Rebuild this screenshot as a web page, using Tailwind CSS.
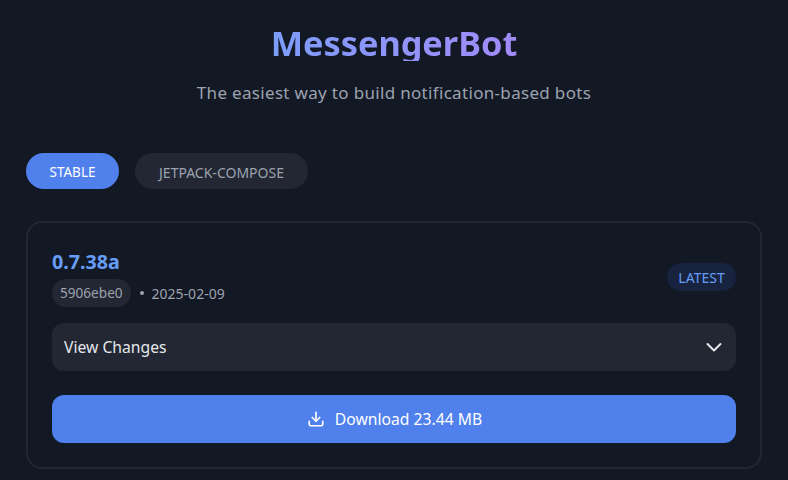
<!DOCTYPE html>
<html lang="en">
<head>
<meta charset="utf-8">
<script src="https://cdn.jsdelivr.net/npm/@tailwindcss/browser@4"></script>
<title>MessengerBot</title>
</head>
<body class="m-0 h-[480px] w-[788px] overflow-hidden bg-[#131825] font-['Noto_Sans',sans-serif] text-[#e5e7eb]">
<main class="flex flex-col px-[26px]">
  <header class="flex flex-col items-center pt-[24px]">
    <h1 class="h-[37px] bg-gradient-to-r from-[#7c9dfb] to-[#a08bf8] bg-clip-text text-[34.3px] leading-[37px] font-bold text-transparent">MessengerBot</h1>
    <p class="mt-[20px] text-[17px] leading-[24px] tracking-[0.32px] text-[#9ca3af]">The easiest way to build notification-based bots</p>
  </header>
  <nav class="mt-[48px] flex gap-4">
    <button class="flex h-9 w-[93px] items-center justify-center rounded-full bg-[#4f80ec] pt-[2px] text-[13.5px] text-white">STABLE</button>
    <button class="flex h-9 w-[173px] items-center justify-center rounded-full bg-[#222733] pt-[2px] text-[14px] text-[#9ca3af]">JETPACK-COMPOSE</button>
  </nav>
  <section class="mt-[32px] h-[248px] w-[736px] rounded-2xl border-2 border-[#222733] px-6 pt-6">
    <div class="flex items-center justify-between">
      <div>
        <div class="mt-[2px] text-[19.7px] leading-[26px] font-bold text-[#669df6]">0.7.38a</div>
        <div class="mt-[4px] flex items-center text-[14px] text-[#9ca3af]">
          <span class="flex h-7 items-center rounded-full bg-[#222733] px-2 text-[13.6px]">5906ebe0</span>
          <span class="mr-[8px] ml-[9px] h-1 w-1 rounded-full bg-[#9ca3af]"></span>
          <span>2025-02-09</span>
        </div>
      </div>
      <span class="flex h-7 w-[69px] items-center justify-center rounded-full bg-[#18233f] pt-px text-[14px] text-[#669df6]">LATEST</span>
    </div>
    <button class="mt-[16px] flex h-12 w-full items-center justify-between rounded-xl bg-[#222733] pr-[10px] pl-3 text-[15.7px] text-[#e5e7eb]">
      <span class="pt-[2px]">View Changes</span>
      <svg class="h-6 w-6" viewBox="0 0 24 24" fill="none" stroke="currentColor" stroke-width="2" stroke-linecap="round" stroke-linejoin="round"><path d="m5.5 9 6.500 6.500L18.500 9"/></svg>
    </button>
    <button class="mt-6 flex h-12 w-full items-center justify-center gap-[10px] rounded-xl bg-[#4f80ec] pl-px text-[15.7px] text-white">
      <svg class="h-[18px] w-[18px]" viewBox="0 0 24 24" fill="none" stroke="currentColor" stroke-width="2.200" stroke-linecap="round" stroke-linejoin="round"><path d="M21 15v4a2 2 0 0 1-2 2H5a2 2 0 0 1-2-2v-4"/><path d="m7 10 5 5 5-5"/><path d="M12 15V3"/></svg>
      <span class="pt-[2px]">Download 23.44 MB</span>
    </button>
  </section>
</main>
</body>
</html>
